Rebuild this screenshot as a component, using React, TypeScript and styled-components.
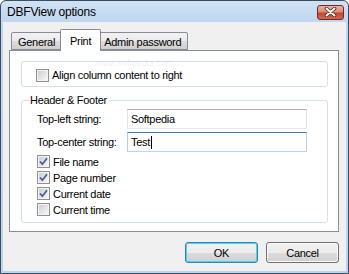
import styled, { createGlobalStyle } from "styled-components";

const GlobalStyle = createGlobalStyle`
  html, body {
    margin: 0;
    padding: 0;
    background: #ffffff;
  }
  body {
    font-family: "Liberation Sans", Arial, sans-serif;
    font-size: 11px;
    letter-spacing: -0.3px;
    color: #000000;
  }
`;

const Window = styled.div`
  position: relative;
  width: 349px;
  height: 274px;
  box-sizing: border-box;
  border: 1px solid #3f4c5c;
  border-radius: 6px 6px 0 0;
  background: linear-gradient(#d0e2f5, #bfd6ef 22px, #bcd3ec);
  display: flex;
  flex-direction: column;
  overflow: hidden;
`;

const TitleBar = styled.div`
  height: 21px;
  flex: none;
  display: flex;
  align-items: center;
  justify-content: space-between;
  padding: 0 4px 0 6px;
`;

const Title = styled.span`
  font-size: 12px;
  letter-spacing: -0.2px;
  color: #000;
  margin-top: 1px;
`;

const CloseButton = styled.div`
  width: 27px;
  height: 15px;
  box-sizing: border-box;
  border: 1px solid #6e2b22;
  border-radius: 3px;
  background: linear-gradient(#eab3a5, #dc8a76 45%, #c4472f 55%, #cf6a4e);
  display: flex;
  align-items: center;
  justify-content: center;
  margin-top: 1px;
`;

const Client = styled.div`
  flex: 1;
  margin: 0 2px 2px 2px;
  background: #f0f0f0;
  padding: 7px 0 0 6px;
  display: flex;
  flex-direction: column;
`;

const TabStrip = styled.div`
  display: flex;
  align-items: flex-end;
  height: 22px;
  padding-left: 2px;
  margin-bottom: -1px;
  position: relative;
  z-index: 1;
`;

const Tab = styled.div<{ $active?: boolean }>`
  box-sizing: border-box;
  position: relative;
  z-index: ${(p) => (p.$active ? 2 : 1)};
  height: ${(p) => (p.$active ? "22px" : "18px")};
  margin: ${(p) => (p.$active ? "0 -2px" : "0 0 1px")};
  padding: ${(p) => (p.$active ? "1px 9px 0" : "2px 6px 0")};
  border: 1px solid #898c95;
  border-bottom: ${(p) => (p.$active ? "none" : "1px solid #898c95")};
  background: ${(p) =>
    p.$active ? "#ffffff" : "linear-gradient(#f2f2f2, #ebebeb 50%, #dddddd 51%, #cfcfcf)"};
  border-radius: 2px 2px 0 0;
  display: flex;
  align-items: center;
  white-space: nowrap;

  & + & {
    margin-left: ${(p) => (p.$active ? "-2px" : "-1px")};
  }
`;

const Panel = styled.div`
  position: relative;
  width: 330px;
  height: 182px;
  box-sizing: border-box;
  border: 1px solid #898c95;
  background: #ffffff;
  padding: 10px 0 0 11px;
  display: flex;
  flex-direction: column;
`;

const GroupBox = styled.div<{ $height: number }>`
  width: 307px;
  height: ${(p) => p.$height}px;
  box-sizing: border-box;
  border: 1px solid #d5dfe5;
  border-radius: 3px;
  display: flex;
  flex-direction: column;
`;

const PlainGroup = styled(GroupBox)`
  justify-content: center;
  padding-left: 14px;
`;

const CaptionGroup = styled(GroupBox)`
  margin-top: 13px;
  padding-left: 15px;
`;

const Caption = styled.span`
  align-self: flex-start;
  margin: -7px 0 0 -8px;
  padding: 0 2px 0 1px;
  height: 13px;
  line-height: 13px;
  background: #ffffff;
`;

const FieldRow = styled.div`
  display: flex;
  align-items: center;
  height: 20px;
  margin-top: 3px;

  &:first-of-type {
    margin-top: 2px;
  }
`;

const FieldLabel = styled.label`
  width: 90px;
  flex: none;
`;

const TextBox = styled.div<{ $focused?: boolean }>`
  width: 180px;
  height: 20px;
  box-sizing: border-box;
  border: 1px solid ${(p) => (p.$focused ? "#569de5" : "#abadb3")};
  border-top-color: ${(p) => (p.$focused ? "#3d7bad" : "#abadb3")};
  border-left-color: ${(p) => (p.$focused ? "#b5cfe7" : "#e2e3ea")};
  border-right-color: ${(p) => (p.$focused ? "#b5cfe7" : "#dbdfe6")};
  border-bottom-color: ${(p) => (p.$focused ? "#b7d9ed" : "#e3e9ef")};
  background: #ffffff;
  padding-left: 3px;
  display: flex;
  align-items: center;
`;

const Caret = styled.span`
  display: inline-block;
  width: 1px;
  height: 13px;
  background: #000;
  margin-left: 1px;
`;

const CheckRow = styled.div`
  display: flex;
  align-items: center;
  height: 13px;
  gap: 3px;
  margin-top: 3px;

  &:first-of-type {
    margin-top: 2px;
  }
`;

const Box = styled.span`
  width: 13px;
  height: 13px;
  box-sizing: border-box;
  border: 1px solid #8e8f8f;
  background: #f4f4f4;
  padding: 1px;
  display: flex;
  flex: none;
`;

const BoxInner = styled.span`
  flex: 1;
  background: linear-gradient(135deg, #cbcfd5, #f7f7f7);
  display: flex;
  align-items: center;
  justify-content: center;
`;

const ButtonRow = styled.div`
  width: 330px;
  display: flex;
  justify-content: flex-end;
  gap: 8px;
  margin-top: 10px;
`;

const Button = styled.div<{ $default?: boolean }>`
  width: 73px;
  height: 21px;
  box-sizing: border-box;
  border: 1px solid ${(p) => (p.$default ? "#3c7fb1" : "#707070")};
  border-radius: 3px;
  box-shadow: inset 0 0 0 1px ${(p) => (p.$default ? "#48d4f8" : "#fbfbfb")};
  background: linear-gradient(#f2f2f2, #ebebeb 50%, #dddddd 51%, #cfcfcf);
  display: flex;
  align-items: center;
  justify-content: center;
`;

const WatermarkUrl = styled.div`
  position: absolute;
  left: 86px;
  top: 7px;
  pointer-events: none;
  font-size: 9px;
  letter-spacing: 0;
  color: rgba(0, 0, 0, 0.09);
`;

const CheckBox = ({ checked, label }: { checked?: boolean; label: string }) => (
  <CheckRow>
    <Box>
      <BoxInner>
        {checked && (
          <svg width="9" height="9" viewBox="0 0 9 9">
            <path d="M1 4.5 L3.4 7.2 L8 1.2" fill="none" stroke="#4a5f97" strokeWidth="1.8" />
          </svg>
        )}
      </BoxInner>
    </Box>
    <span>{label}</span>
  </CheckRow>
);

const App = () => {
  return (
    <>
      <GlobalStyle />
      <Window>
        <TitleBar>
          <Title>DBFView options</Title>
          <CloseButton>
            <svg width="13" height="10" viewBox="0 0 13 10">
              <path d="M2.5 1.5 L10.5 8.5 M10.5 1.5 L2.5 8.5" stroke="#5a2018" strokeWidth="3.6" strokeLinecap="round" />
              <path d="M2.5 1.5 L10.5 8.5 M10.5 1.5 L2.5 8.5" stroke="#ffffff" strokeWidth="2" strokeLinecap="round" />
            </svg>
          </CloseButton>
        </TitleBar>
        <Client>
          <TabStrip>
            <Tab>General</Tab>
            <Tab $active>Print</Tab>
            <Tab>Admin password</Tab>
          </TabStrip>
          <Panel>
            <WatermarkUrl>www.softpedia.com</WatermarkUrl>
            <PlainGroup $height={26}>
              <CheckBox label="Align column content to right" />
            </PlainGroup>
            <CaptionGroup $height={123}>
              <Caption>Header &amp; Footer</Caption>
              <FieldRow>
                <FieldLabel>Top-left string:</FieldLabel>
                <TextBox>Softpedia</TextBox>
              </FieldRow>
              <FieldRow>
                <FieldLabel>Top-center string:</FieldLabel>
                <TextBox $focused>
                  Test
                  <Caret />
                </TextBox>
              </FieldRow>
              <CheckBox checked label="File name" />
              <CheckBox checked label="Page number" />
              <CheckBox checked label="Current date" />
              <CheckBox label="Current time" />
            </CaptionGroup>
          </Panel>
          <ButtonRow>
            <Button $default>OK</Button>
            <Button>Cancel</Button>
          </ButtonRow>
        </Client>
      </Window>
    </>
  );
};

export default App;
